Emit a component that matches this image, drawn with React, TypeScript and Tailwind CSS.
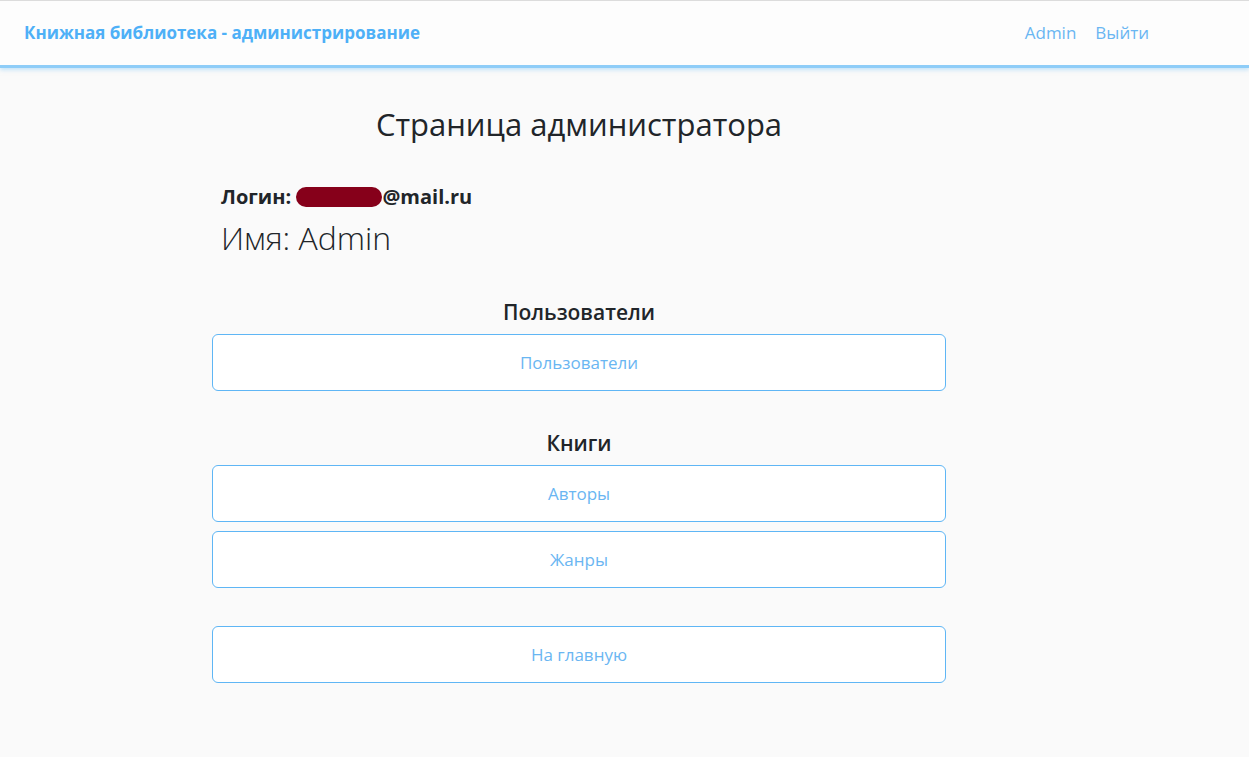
export default function App() {
  const font = { fontFamily: '"Open Sans", "Noto Sans", sans-serif' };
  const btn =
    "flex h-[57px] w-full items-center justify-center rounded-[6px] border border-[#5fb6f5] bg-white text-[17px] text-[#6ab6f2]";
  return (
    <div className="min-h-[757px] bg-[#fafafa] text-[#212529]" style={font}>
      <header className="flex h-[68px] items-center justify-between border-t border-[#dcdcdc] border-b-[3px] border-b-[#8ecdf8] bg-[#fdfdfd] pb-[1px] pl-[24px] pr-[100px] shadow-[0_2px_4px_rgba(142,205,248,0.5)]">
        <span className="text-[17px] font-bold text-[#4eb0f7]">
          Книжная библиотека - администрирование
        </span>
        <nav className="flex gap-[19px] text-[17px] text-[#6ab6f2]">
          <span>Admin</span>
          <span>Выйти</span>
        </nav>
      </header>

      <main className="flex w-[734px] flex-col pt-[36px]" style={{ marginLeft: 212 }}>
        <h1 className="text-center text-[31px] font-medium leading-[40px]">
          Страница администратора
        </h1>

        <div className="mt-[40px] px-[9px]">
          <p className="text-[20px] font-bold leading-[26px]">
            Логин:{" "}
            <span className="inline-block h-[20px] w-[86px] translate-y-[3px] rounded-full bg-[#86001a]" />
            @mail.ru
          </p>
          <p className="mt-[8px] text-[32px] font-light leading-[40px]">Имя: Admin</p>
        </div>

        <h2 className="mt-[39px] text-center text-[21px] font-semibold leading-[30px]">
          Пользователи
        </h2>
        <div className="mt-[7px]">
          <button className={btn}>Пользователи</button>
        </div>

        <h2 className="mt-[37px] text-center text-[21px] font-semibold leading-[30px]">
          Книги
        </h2>
        <div className="mt-[7px] flex flex-col gap-[9px]">
          <button className={btn}>Авторы</button>
          <button className={btn}>Жанры</button>
        </div>

        <div className="mt-[38px]">
          <button className={btn}>На главную</button>
        </div>
      </main>
    </div>
  );
}
